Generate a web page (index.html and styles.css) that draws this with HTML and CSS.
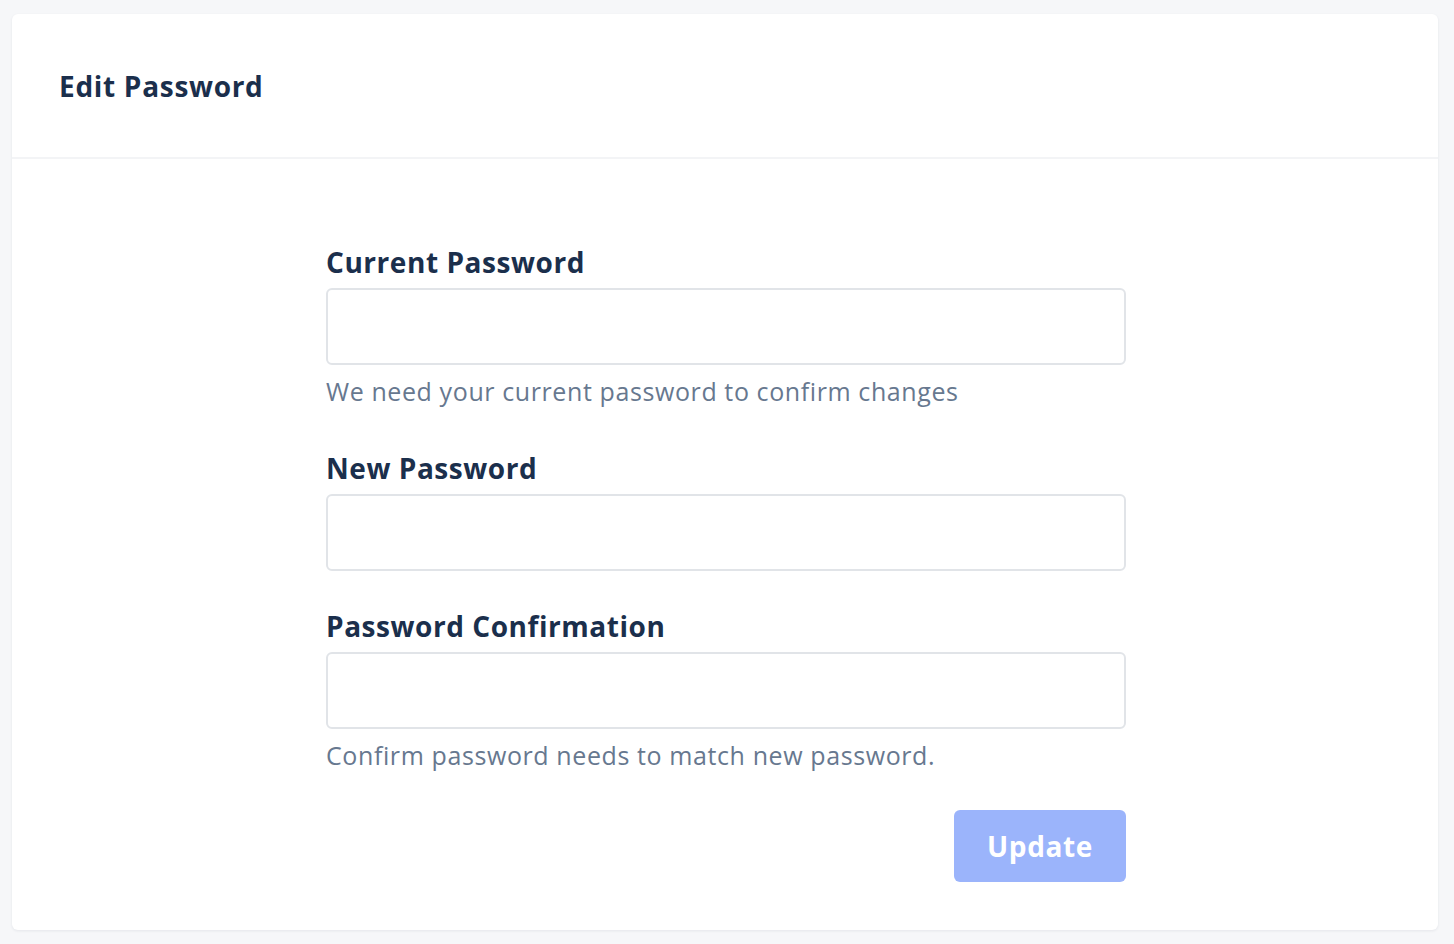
FILE: index.html
```html
<!DOCTYPE html>
<html>
<head>
<meta charset="utf-8">
<link rel="stylesheet" href="styles.css">
</head>
<body>
<div class="card">
  <div class="card-header">
    <h1 class="title">Edit Password</h1>
  </div>
  <div class="card-body">
    <form class="form">
      <div class="field">
        <label class="label">Current Password</label>
        <input class="input" type="password">
        <p class="help">We need your current password to confirm changes</p>
      </div>
      <div class="field">
        <label class="label">New Password</label>
        <input class="input" type="password">
      </div>
      <div class="field">
        <label class="label">Password Confirmation</label>
        <input class="input" type="password">
        <p class="help">Confirm password needs to match new password.</p>
      </div>
      <div class="actions">
        <button class="btn" type="button">Update</button>
      </div>
    </form>
  </div>
</div>
</body>
</html>
```

FILE: styles.css
```css
html, body {
  margin: 0;
  padding: 0;
  background: #f6f7f9;
  font-family: "Open Sans", "Noto Sans", sans-serif;
}
body {
  padding: 14px 16px 14px 12px;
}
.card {
  background: #ffffff;
  border-radius: 6px;
  box-shadow: 0 1px 3px rgba(30, 40, 60, 0.08);
  height: 916px;
  box-sizing: border-box;
}
.card-header {
  height: 145px;
  box-sizing: border-box;
  border-bottom: 2px solid #f3f4f6;
  padding: 0 47px;
  display: flex;
  align-items: center;
}
.title {
  margin: 0;
  font-size: 28px;
  font-weight: 700;
  color: #1b2f4c;
  letter-spacing: 0.7px;
}
.card-body {
  padding-top: 85px;
  padding-left: 2px;
}
.form {
  width: 800px;
  margin: 0 auto;
}
.field {
  display: flex;
  flex-direction: column;
  margin-bottom: 37px;
}
.label {
  font-size: 28px;
  font-weight: 700;
  color: #1b2f4c;
  line-height: 36px;
  margin-bottom: 8px;
  letter-spacing: 0.55px;
}
.input {
  height: 77px;
  box-sizing: border-box;
  border: 2px solid #e1e4e8;
  border-radius: 6px;
  background: #fff;
  margin: 0;
}
.help {
  margin: 10px 0 6px;
  font-size: 25px;
  line-height: 32px;
  color: #67788f;
  letter-spacing: 0.6px;
}
.actions {
  display: flex;
  justify-content: flex-end;
  margin-top: -4px;
}
.btn {
  width: 172px;
  height: 72px;
  border: none;
  border-radius: 6px;
  background: #9bb4fb;
  color: #fff;
  font-family: inherit;
  font-size: 28px;
  font-weight: 700;
  letter-spacing: 0.6px;
}
```
